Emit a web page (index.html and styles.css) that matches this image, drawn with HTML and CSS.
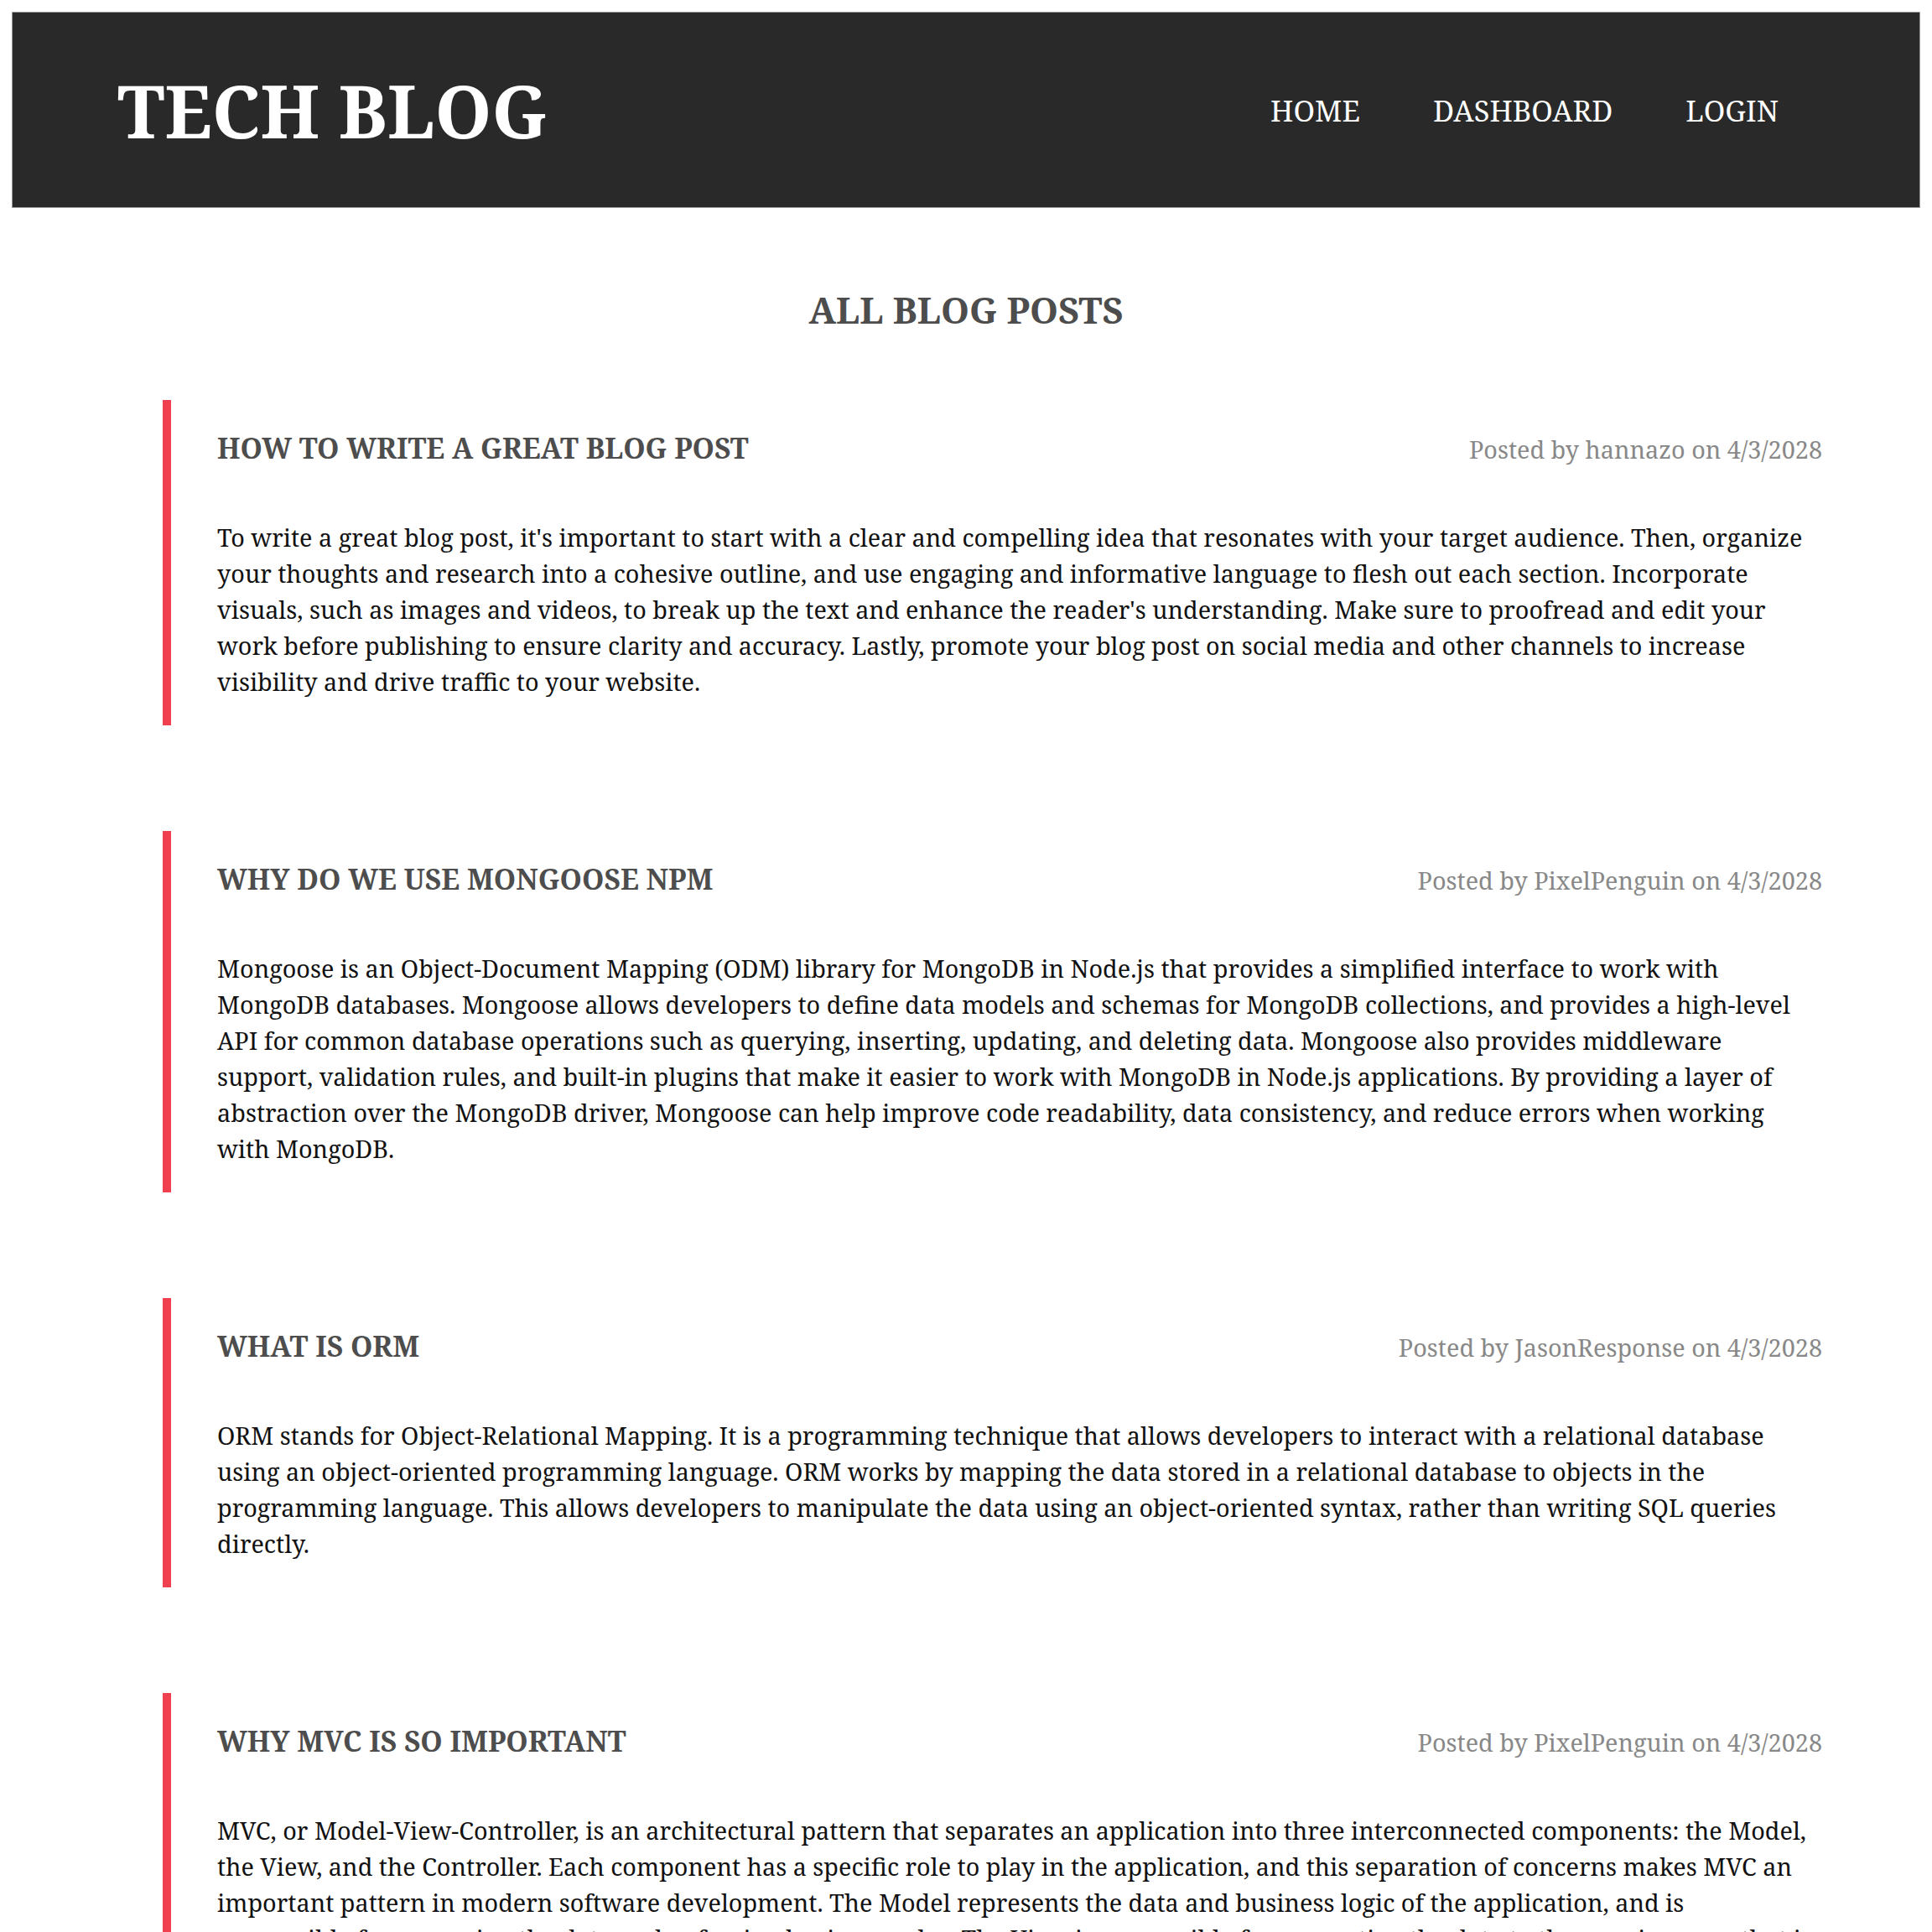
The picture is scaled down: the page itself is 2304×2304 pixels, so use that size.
FILE: index.html
```html
<!DOCTYPE html>
<html lang="en">
<head>
<meta charset="utf-8">
<title>Tech Blog</title>
<link rel="stylesheet" href="styles.css">
</head>
<body>
<header class="site-header">
  <a class="logo" href="#">TECH BLOG</a>
  <nav class="nav">
    <a href="#">HOME</a>
    <a href="#">DASHBOARD</a>
    <a href="#">LOGIN</a>
  </nav>
</header>
<main class="main">
  <h1 class="page-title">ALL BLOG POSTS</h1>
  <section class="posts">
    <article class="post">
      <div class="post-head">
        <h2 class="post-title">HOW TO WRITE A GREAT BLOG POST</h2>
        <span class="post-meta">Posted by hannazo on 4/3/2028</span>
      </div>
      <p class="post-body">To write a great blog post, it's important to start with a clear and compelling idea that resonates with your target audience. Then, organize your thoughts and research into a cohesive outline, and use engaging and informative language to flesh out each section. Incorporate visuals, such as images and videos, to break up the text and enhance the reader's understanding. Make sure to proofread and edit your work before publishing to ensure clarity and accuracy. Lastly, promote your blog post on social media and other channels to increase visibility and drive traffic to your website.</p>
    </article>
    <article class="post">
      <div class="post-head">
        <h2 class="post-title">WHY DO WE USE MONGOOSE NPM</h2>
        <span class="post-meta">Posted by PixelPenguin on 4/3/2028</span>
      </div>
      <p class="post-body">Mongoose is an Object-Document Mapping (ODM) library for MongoDB in Node.js that provides a simplified interface to work with MongoDB databases. Mongoose allows developers to define data models and schemas for MongoDB collections, and provides a high-level API for common database operations such as querying, inserting, updating, and deleting data. Mongoose also provides middleware support, validation rules, and built-in plugins that make it easier to work with MongoDB in Node.js applications. By providing a layer of abstraction over the MongoDB driver, Mongoose can help improve code readability, data consistency, and reduce errors when working with MongoDB.</p>
    </article>
    <article class="post">
      <div class="post-head">
        <h2 class="post-title">WHAT IS ORM</h2>
        <span class="post-meta">Posted by JasonResponse on 4/3/2028</span>
      </div>
      <p class="post-body">ORM stands for Object-Relational Mapping. It is a programming technique that allows developers to interact with a relational database using an object-oriented programming language. ORM works by mapping the data stored in a relational database to objects in the programming language. This allows developers to manipulate the data using an object-oriented syntax, rather than writing SQL queries directly.</p>
    </article>
    <article class="post">
      <div class="post-head">
        <h2 class="post-title">WHY MVC IS SO IMPORTANT</h2>
        <span class="post-meta">Posted by PixelPenguin on 4/3/2028</span>
      </div>
      <p class="post-body">MVC, or Model-View-Controller, is an architectural pattern that separates an application into three interconnected components: the Model, the View, and the Controller. Each component has a specific role to play in the application, and this separation of concerns makes MVC an important pattern in modern software development. The Model represents the data and business logic of the application, and is responsible for managing the data and enforcing business rules. The View is responsible for presenting the data to the user in a way that is easy to understand and interact with. The Controller acts as an intermediary between the Model and the View, handling user input and updating the Model and View accordingly.</p>
    </article>
  </section>
</main>
</body>
</html>
```
FILE: styles.css
```css
* { box-sizing: border-box; }

body {
  margin: 0;
  font-family: "Noto Serif", "DejaVu Serif", serif;
  color: #111;
  background: #fff;
}

a { text-decoration: none; color: inherit; }

.site-header {
  margin: 14px 14px 0 14px;
  height: 234px;
  background: #292929;
  border: 1px solid #9a9a9a;
  display: flex;
  align-items: center;
  justify-content: space-between;
  padding: 0 168px 0 125px;
}

.logo {
  color: #fff;
  font-size: 86.4px;
  font-weight: 700;
}

.nav {
  display: flex;
  gap: 87px;
}

.nav a {
  color: #fff;
  font-size: 34.5px;
}

.page-title {
  margin: 92px 0 78px;
  text-align: center;
  font-size: 43.2px;
  font-weight: 700;
  color: #4d4d4d;
}

.posts {
  margin: 0 131px 0 194px;
  display: flex;
  flex-direction: column;
  gap: 126px;
}

.post {
  border-left: 10px solid #f0404f;
  padding: 34px 0 31px 55px;
}

.post-head {
  display: flex;
  justify-content: space-between;
  align-items: baseline;
}

.post-title {
  margin: 0;
  font-size: 33.6px;
  font-weight: 700;
  color: #4d4d4d;
}

.post-meta {
  font-size: 28.8px;
  color: #888;
}

.post-body {
  margin: 62px 0 0;
  font-size: 28.8px;
  line-height: 43px;
  color: #111;
}
```
